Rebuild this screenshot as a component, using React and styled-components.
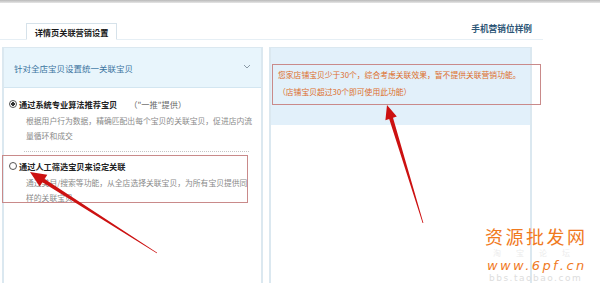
import styled, { createGlobalStyle } from "styled-components";

const GlobalStyle = createGlobalStyle`
  html, body {
    margin: 0;
    padding: 0;
    background: #fff;
  }
  body {
    font-family: "Noto Sans CJK SC", "Noto Sans", sans-serif;
  }
`;

export default function App() {
  return (
    <Page>
      <GlobalStyle />
      <TopStrip />
      <TabBar>
        <Tab>详情页关联营销设置</Tab>
        <SideLink>手机营销位样例</SideLink>
      </TabBar>
      <Panels>
        <LeftPanel>
          <PanelHead>
            <span>针对全店宝贝设置统一关联宝贝</span>
            <svg width="8" height="5" viewBox="0 0 8 5">
              <polyline
                points="1,1 4,4 7,1"
                fill="none"
                stroke="#8a9aa6"
                strokeWidth="1"
              />
            </svg>
          </PanelHead>
          <Option>
            <OptionTitle>
              <Radio $checked />
              <b>通过系统专业算法推荐宝贝</b>
              <Note>（"一推"提供）</Note>
            </OptionTitle>
            <Desc>
              根据用户行为数据，精确匹配出每个宝贝的关联宝贝，促进店内流
              <br />
              量循环和成交
            </Desc>
          </Option>
          <Divider />
          <Option $second>
            <OptionTitle>
              <Radio />
              <b>通过人工筛选宝贝来设定关联</b>
            </OptionTitle>
            <Desc>
              通过类目/搜索等功能，从全店选择关联宝贝，为所有宝贝提供同
              <br />
              样的关联宝贝
            </Desc>
          </Option>
        </LeftPanel>
        <RightPanel>
          <NoticeHead>
            您家店铺宝贝少于30个，综合考虑关联效果，暂不提供关联营销功能。
            <br />
            （店铺宝贝超过30个即可使用此功能）
          </NoticeHead>
        </RightPanel>
      </Panels>

      <Marks width="600" height="283" viewBox="0 0 600 283">
        <rect x="2.5" y="155.5" width="245" height="47" fill="none" stroke="#c98a8a" strokeWidth="1" />
        <rect x="272.5" y="64.5" width="268" height="40" fill="none" stroke="#c98a8a" strokeWidth="1" />
        <polygon
          points="30,172 47.3,174.7 44.6,178.9 157.2,252.7 156.8,253.3 42.4,182.3 39.7,186.5"
          fill="#cc1111"
        />
        <polygon
          points="387,105 396.8,116.6 393,117.8 423.4,222.9 422.6,223.1 389.2,119 385.4,120.2"
          fill="#cc1111"
        />
      </Marks>

      <Watermark>
        <Brand>资源批发网</Brand>
        <Faint>淘宝论坛</Faint>
        <Url>www.6pf.cn</Url>
        <Bbs>bbs.taobao.com</Bbs>
      </Watermark>
    </Page>
  );
}

const Page = styled.div`
  position: relative;
  width: 600px;
  height: 283px;
  overflow: hidden;
  background: #fff;
`;

const TopStrip = styled.div`
  height: 3px;
  background: linear-gradient(#b9b9b9, #e6e6e6);
`;

const TabBar = styled.div`
  width: 543px;
  height: 37px;
  box-sizing: border-box;
  padding: 0 11px 0 26px;
  display: flex;
  align-items: flex-end;
  justify-content: space-between;
  border-bottom: 1px solid #e6eff5;
`;

const Tab = styled.div`
  width: 91px;
  height: 17px;
  box-sizing: border-box;
  margin-bottom: -1px;
  border: 1px solid #d6e2ea;
  border-bottom: 1px solid #fff;
  background: #fff;
  font-size: 8.2px;
  font-weight: 700;
  color: #1a1a1a;
  display: flex;
  align-items: center;
  justify-content: center;
`;

const SideLink = styled.div`
  font-size: 8.7px;
  font-weight: 700;
  color: #2d5676;
  padding-bottom: 4px;
`;

const Panels = styled.div`
  display: flex;
  gap: 6px;
  padding-left: 2px;
  margin-top: 7px;
`;

const PanelBase = styled.div`
  box-sizing: border-box;
  height: 240px;
  border: 2px solid #dbe8f0;
  border-top-width: 1px;
`;

const LeftPanel = styled(PanelBase)`
  width: 261px;
`;

const RightPanel = styled(PanelBase)`
  width: 263px;
`;

const PanelHead = styled.div`
  height: 40px;
  box-sizing: border-box;
  padding: 0 10px 0 10px;
  background: #e8f5fc;
  border-bottom: 1px solid #d3e6f1;
  display: flex;
  align-items: center;
  justify-content: space-between;
  font-size: 8.5px;
  color: #3b74a0;

  svg {
    margin-top: -3px;
  }
`;

const Option = styled.div`
  padding: ${(p) => (p.$second ? "8px" : "10px")} 0 0 5px;
`;

const OptionTitle = styled.div`
  display: flex;
  align-items: center;
  font-size: 8.2px;
  line-height: 12px;
  color: #222;

  b {
    font-weight: 700;
  }
`;

const Radio = styled.span`
  width: 8px;
  height: 8px;
  box-sizing: border-box;
  border: 1px solid #555;
  border-radius: 50%;
  margin-right: 2px;
  background: ${(p) =>
    p.$checked ? "radial-gradient(circle, #333 0 1.6px, #fff 2px)" : "#fff"};
`;

const Note = styled.span`
  margin-left: 12px;
  color: #666;
`;

const Desc = styled.div`
  margin: 3px 0 0 17px;
  font-size: 7.8px;
  line-height: 15px;
  color: #8a8a8a;
  white-space: nowrap;
`;

const Divider = styled.div`
  margin: 8px 12px 0 20px;
  border-top: 1px dotted #c4c4c4;
`;

const NoticeHead = styled.div`
  height: 77px;
  box-sizing: border-box;
  padding: 18px 0 0 7px;
  background: #e2f0fa;
  font-size: 7.8px;
  line-height: 17px;
  color: #dd6e2a;
  white-space: nowrap;
`;

const Marks = styled.svg`
  position: absolute;
  left: 0;
  top: 0;
  pointer-events: none;
`;

const Watermark = styled.div`
  position: absolute;
  left: 485px;
  top: 225px;
  width: 115px;
  display: flex;
  flex-direction: column;
  align-items: flex-start;
`;

const Brand = styled.div`
  font-size: 18px;
  line-height: 22px;
  letter-spacing: 2.5px;
  color: #f07a1e;
`;

const Faint = styled.div`
  font-size: 8px;
  line-height: 11px;
  letter-spacing: 15px;
  margin-left: 8px;
  color: #ececec;
`;

const Url = styled.div`
  font-family: "DejaVu Sans", sans-serif;
  font-size: 13px;
  line-height: 15px;
  letter-spacing: 2.4px;
  color: #f07a1e;
  font-style: italic;
  margin-left: 2px;
`;

const Bbs = styled.div`
  font-family: "DejaVu Sans", sans-serif;
  font-size: 9px;
  line-height: 10px;
  letter-spacing: 1.5px;
  color: #dddddd;
  margin-left: 4px;
`;
